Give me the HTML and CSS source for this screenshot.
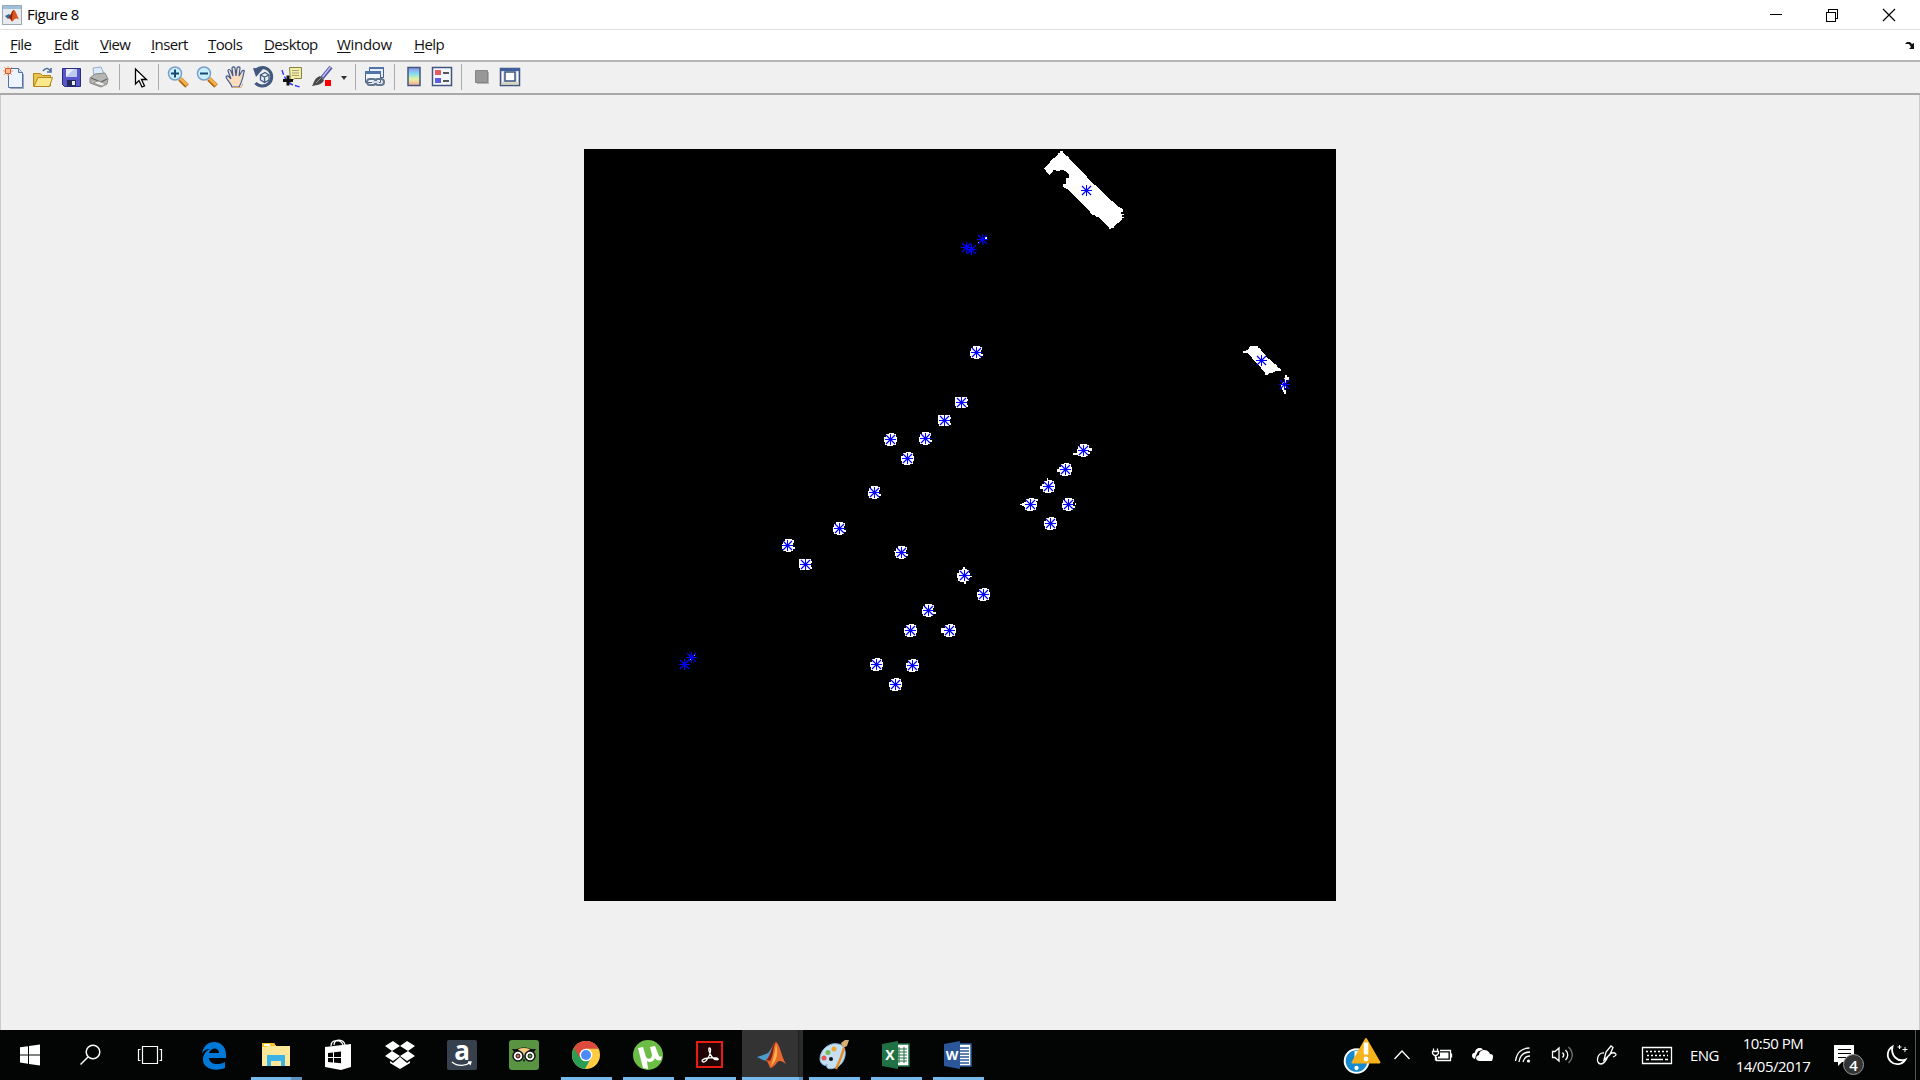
FILE: index.html
```html
<!DOCTYPE html>
<html lang="en">
<head>
<meta charset="utf-8">
<title>Figure 8</title>
<link rel="stylesheet" href="styles.css">
</head>
<body>
<div class="screen">
<header class="titlebar">
  <svg class="app-icon" viewBox="0 0 20 20"><rect x=".5" y=".5" width="19" height="19" fill="#e8ebee" stroke="#9aa7b4"/><path d="M1 1h18v3H1z" fill="#9cc0dc"/><path d="M3 11l4-2 2 2-3 3z" fill="#2a6a9c"/><path d="M6 13c3-2 4-8 6-8 2 1 3 6 5 9-3-1-4-1-7 3-1-2-2-4-4-4z" fill="#d9541e"/><path d="M12 5c-2 3-2 8-2 11-1-2-2-3-4-3 3-2 4-8 6-8z" fill="#8c2410"/></svg>
  <span class="title">Figure 8</span>
  <svg class="window-buttons" viewBox="0 0 150 28" shape-rendering="crispEdges"><g fill="none" stroke="#000"><path d="M0 13.500h12M56.500 11.500h9v9h-9zM58.500 11v-2.500h9v9h-2"/><path d="M113 8l12 12M125 8l-12 12" shape-rendering="auto" stroke-width="1.200"/></g></svg>
</header>
<nav class="menubar">
  <span class="menu m-file"><u>F</u>ile</span><span class="menu m-edit"><u>E</u>dit</span><span class="menu m-view"><u>V</u>iew</span><span class="menu m-insert"><u>I</u>nsert</span><span class="menu m-tools"><u>T</u>ools</span><span class="menu m-desktop"><u>D</u>esktop</span><span class="menu m-window"><u>W</u>indow</span><span class="menu m-help"><u>H</u>elp</span>
  <svg class="dock-arrow" viewBox="0 0 10 8"><path d="M0 3l2-2h3l2 2 2-1v6H4l2-2-2-3H0z" fill="#111"/></svg>
</nav>
<div class="toolbar">
  <div class="group file">
    <svg viewBox="0 0 24 24"><path d="M6.500 3.500h10l4 4v15h-14z" fill="#eef4ff" stroke="#5572a5"/><path d="M16.500 3.500v4h4" fill="#c8d8f4" stroke="#5572a5"/><path d="M21.500 9v14.500H8" fill="none" stroke="#9aa6bc"/><path d="M2 2l8 8M10 2l-8 8M6 1v10M1 6h10" stroke="#f0a070"/><path d="M3.500 3.500h5v5h-5z" fill="#ffb890" stroke="#d8582c"/></svg>
    <svg viewBox="0 0 24 24"><path d="M2.500 21V8.500h7l2 2h8V21z" fill="#e9c252" stroke="#b38618"/><path d="M3 21.500l4-9h14.500l-3 9z" fill="#fbe78c" stroke="#b38618"/><path d="M12 6c3-4 6-3 8 1m0-4v4h-4" fill="none" stroke="#536f9d" stroke-width="1.600"/></svg>
    <svg viewBox="0 0 24 24"><path d="M3.500 3.500h18v18h-16l-2-2z" fill="#5757c9" stroke="#2c2c86"/><path d="M7 4h11v8H7z" fill="#e8edfb"/><path d="M15 4h3v8H7z" fill="#bccaf0"/><path d="M8 15h9v6H8z" fill="#222a58"/><path d="M13 16h3v4h-3z" fill="#eee"/></svg>
    <svg viewBox="0 0 24 24"><path d="M6 11l-1-8 8-1 4 9z" fill="#dcebff" stroke="#9aabc4"/><path d="M2 13l5-4 10-1 3 6-1 5-6 3-11-4z" fill="#b5b5b2" stroke="#888"/><path d="M3 13l10 4 6-3" fill="none" stroke="#666" stroke-width="1.300"/><path d="M5 18l9 3 4-2-8-3z" fill="#f0f0ee" stroke="#999"/></svg>
  </div>
  <i class="sep"></i>
  <div class="group solo">
    <svg viewBox="0 0 24 24"><path d="M7.500 4v15l3.500-3.500 3 6.500 2.500-1-3-6.500h5z" fill="#fff" stroke="#000" stroke-width="1.300"/></svg>
  </div>
  <i class="sep"></i>
  <div class="group view">
    <svg viewBox="0 0 24 24"><path d="M14 14l7 7" stroke="#b56812" stroke-width="5"/><path d="M14 13l7 7" stroke="#f4b04c" stroke-width="3"/><circle cx="9" cy="8.500" r="6.500" fill="#c6f0fb" stroke="#7b9fcb" stroke-width="1.500"/><path d="M5 8.500h8M9 4.500v8" stroke="#1c4770" stroke-width="2"/></svg>
    <svg viewBox="0 0 24 24"><path d="M14 14l7 7" stroke="#b56812" stroke-width="5"/><path d="M14 13l7 7" stroke="#f4b04c" stroke-width="3"/><circle cx="9" cy="8.500" r="6.500" fill="#c6f0fb" stroke="#7b9fcb" stroke-width="1.500"/><path d="M5 8.500h8" stroke="#1c4770" stroke-width="2"/></svg>
    <svg viewBox="0 0 24 24"><path d="M8 22c-1-4-6-8-6-10 1-2 3-1 5 2L4 6c0-2 2-2 3 0l2 5-1-8c1-2 3-1 3 0l1 8 1-8c1-2 3-1 3 0l-1 8 3-5c1-1 3-1 2 1-1 5-2 10-5 15z" fill="#fbdcbc" stroke="#3f5c97" stroke-width="1.200"/><path d="M9 22.500h8l2-4" fill="none" stroke="#dda878"/></svg>
    <svg viewBox="0 0 24 24"><path d="M4 5a9.300 9.300 0 1 1-.5 13" fill="none" stroke="#42587f" stroke-width="3"/><path d="M1 3l10 1-7 8z" fill="#42587f"/><path d="M8.500 10l4.500-2.500 4 2.500v5l-4.500 2.500-4-2.500zM8.500 10l4 2 4.500-2M12.500 12v5" fill="#e6eefb" stroke="#42587f" stroke-width="1.300"/></svg>
    <svg viewBox="0 0 24 24"><path d="M1 5c2 7 5 12 9 14s7 2 9 3" fill="none" stroke="#33f" stroke-width="1.400" stroke-dasharray="5 2"/><path d="M8.500 2.500h12v11h-7l-4 4z" fill="#f1edaa" stroke="#87843e"/><path d="M11 5.500h7M11 8h7M11 10.500h7" stroke="#aaa46a"/><path d="M2 15.500h10M7 10.500v10" stroke="#111" stroke-width="3"/></svg>
    <svg viewBox="0 0 24 24"><path d="M21 2l-9 11" stroke="#52569c" stroke-width="4"/><path d="M20.500 2l-8 10" stroke="#babfff" stroke-width="1.500"/><path d="M2 21c2-3 2-8 8-10l4 4c-2 5-7 5-12 6z" fill="#494949"/><path d="M6 18l5-5" stroke="#999"/><path d="M15 15h6v6h-6z" fill="#f00"/></svg>
  </div>
  <svg class="drop" viewBox="0 0 8 24"><path d="M1 11h6l-3 4z" fill="#333"/></svg>
  <i class="sep"></i>
  <div class="group link">
    <svg viewBox="0 0 24 24"><path d="M6.500 2.500h14v10h-14z" fill="#e4edfa" stroke="#485d88"/><path d="M2.500 6.500h15v11h-15z" fill="#f0f5ff" stroke="#485d88"/><path d="M2 6h16v3H2zM6 2h15v2H6z" fill="#5474a8"/><g fill="none" stroke="#61758e" stroke-width="2"><rect x="4" y="14" width="9" height="6" rx="3"/><rect x="12" y="14" width="9" height="6" rx="3"/></g><path d="M9 17h7" stroke="#cddaeb" stroke-width="2"/></svg>
  </div>
  <i class="sep"></i>
  <div class="group bars">
    <svg viewBox="0 0 24 24"><defs><linearGradient id="cb" x2="0" y2="1"><stop stop-color="#918ce8"/><stop offset=".35" stop-color="#82dff1"/><stop offset=".65" stop-color="#e9f3a0"/><stop offset="1" stop-color="#f5a592"/></linearGradient></defs><path d="M6 2.500h12v18H6z" fill="url(#cb)" stroke="#405580" stroke-width="1.500"/></svg>
    <svg viewBox="0 0 24 24"><path d="M2.500 2.500h19v18h-19z" fill="#f6f8ff" stroke="#405580" stroke-width="1.500"/><path d="M5 5h6v5H5z" fill="#e25d5d"/><path d="M5 13h6v5H5z" fill="#5d5de2"/><path d="M13 8h6M13 16h6" stroke="#222" stroke-width="1.500"/></svg>
  </div>
  <i class="sep"></i>
  <div class="group plots">
    <svg viewBox="0 0 24 24"><path d="M7 7h12v12H7z" fill="#b5b5b5"/><path d="M5.500 5.500h12v12h-12z" fill="#989898" stroke="#858585"/></svg>
    <svg viewBox="0 0 24 24"><path d="M2.500 3.500h19v17h-19z" fill="#d7ddeb" stroke="#405580" stroke-width="1.500"/><path d="M2 3h20v3H2z" fill="#3f5f9d"/><path d="M7 7h10v9H7z" fill="#fff" stroke="#405580" stroke-width="1.500"/><path d="M4.500 7v10M19.500 7v10" stroke="#fff"/><path d="M3 18.500h18" stroke="#d8d5b5" stroke-width="2"/></svg>
  </div>
</div>
<main class="figure">
  <svg class="axes" viewBox="584 149 752 752" shape-rendering="crispEdges">
    <defs>
      <g id="star"><path d="M-5 .5H6M.5-5V6" fill="none" stroke="#00f"/><path d="M-1-1h3v3h-3z" fill="#00f"/><path d="M-4-4L5 5M5-4L-4 5" fill="none" stroke="#00f" stroke-width="1.200" shape-rendering="auto"/></g>
      <path id="a" d="M-4-5H-1V-6H4V-5H6V-2H7V3H6V6H3V7H-3V6H-5V3H-6V-2H-4z" fill="#fff"/>
      <path id="b" d="M-6-5H6V-3H7V-1H6V3H7V5H5V6H-5V4H-6z" fill="#fff"/>
      <path id="c" d="M-3-6H4V-5H6V-2H5V2H7V4H5V6H3V7H-2V6H-5V4H-6V-1H-5V-4H-3z" fill="#fff"/>
    </defs>
    <path fill="#fff" d="M1060 151H1063V153L1066 156L1069 157V159L1073 162L1077 167L1081 170L1084 174L1087 176V178L1092 183L1097 186L1101 191L1106 195L1110 200L1114 202L1117 206L1121 208L1123 210V212H1121V214H1124V215H1122V217H1124V218H1122V220L1118 223L1114 226V228H1111V229H1109V228L1103 222L1100 219L1098 217H1096L1094 215H1092L1090 212L1087 209L1082 203L1077 199L1072 193L1067 189L1063 187V184H1066V178H1069V175L1066 172V171L1061 170L1058 171L1053 170V172L1051 173L1050 175H1049L1047 173L1046 171L1044 169L1045 167L1050 163V161L1054 158L1058 154V153H1060z"/>
    <path fill="#fff" d="M1243 351H1245L1249 349V347L1251 346H1258V348H1260L1262 352L1265 354L1267 358L1271 360L1273 363L1277 365L1278 368L1281 369V371H1276L1272 373L1269 373L1267 375H1265V373L1262 370L1260 366L1253 360L1252 357L1249 355L1248 353H1243z"/>
    <path fill="#fff" d="M1285 375h2v2h2v3h-3v7l-1 1 1 4v2h-2v-1l-2-4-1-4 3-4z"/>
    <g fill="#fff"><path d="M985 237h2v2h-2zM978 242h2v1h-2zM970 251h1v1h-1zM693 655h2v1h-2zM690 659h1v1h-1z"/>
    <path d="M1073 453h6v2h-6zM1088 448h4v3h-4zM1057 469h4v3h-4zM1040 486h4v3h-4zM1047 478h1v3h-1zM1020 504h5v1h-5zM1022 503h3v3h-3zM1036 499h2v2h-2zM894 551h2v1h-2zM963 567h2v3h-2zM969 576h3v1h-3zM964 580h2v4h-2zM934 612h2v2h-2zM941 628h3v5h-3zM788 539h1v3h-1zM1075 503h1v2h-1z"/></g>
    <g><use href="#c" x="976" y="352"/><use href="#b" x="961" y="402"/><use href="#b" x="944" y="420"/><use href="#a" x="890" y="439"/><use href="#c" x="925" y="438"/><use href="#a" x="907" y="458"/><use href="#c" x="874" y="492"/><use href="#c" x="839" y="528"/><use href="#c" x="788" y="545"/><use href="#b" x="805" y="564"/><use href="#c" x="901" y="552"/><use href="#a" x="963" y="575"/><use href="#c" x="1083" y="450"/><use href="#a" x="1065" y="469"/><use href="#a" x="1048" y="486"/><use href="#a" x="1030" y="504"/><use href="#c" x="1068" y="504"/><use href="#a" x="1050" y="523"/><use href="#a" x="983" y="594"/><use href="#c" x="928" y="610"/><use href="#a" x="910" y="630"/><use href="#a" x="949" y="630"/><use href="#a" x="876" y="664"/><use href="#a" x="912" y="665"/><use href="#a" x="895" y="684"/></g>
    <g><use href="#star" x="1086" y="190"/><use href="#star" x="982" y="239"/><use href="#star" x="966" y="247"/><use href="#star" x="971" y="249"/><use href="#star" x="976" y="352"/><use href="#star" x="1261" y="360"/><use href="#star" x="1284" y="384"/><use href="#star" x="961" y="402"/><use href="#star" x="944" y="420"/><use href="#star" x="890" y="439"/><use href="#star" x="925" y="438"/><use href="#star" x="907" y="458"/><use href="#star" x="874" y="492"/><use href="#star" x="839" y="528"/><use href="#star" x="787" y="545"/><use href="#star" x="805" y="564"/><use href="#star" x="901" y="552"/><use href="#star" x="964" y="575"/><use href="#star" x="1083" y="450"/><use href="#star" x="1065" y="469"/><use href="#star" x="1048" y="486"/><use href="#star" x="1030" y="504"/><use href="#star" x="1068" y="504"/><use href="#star" x="1050" y="523"/><use href="#star" x="983" y="594"/><use href="#star" x="928" y="610"/><use href="#star" x="910" y="630"/><use href="#star" x="949" y="630"/><use href="#star" x="876" y="664"/><use href="#star" x="912" y="665"/><use href="#star" x="895" y="684"/><use href="#star" x="691" y="657"/><use href="#star" x="684" y="664"/></g>
  </svg>
</main>
<footer class="taskbar">
  <div class="system">
    <svg viewBox="0 0 60 50"><path d="M20 17.300l8-1.100V24.500h-8zM29 16l11-1.500v10H29zM20 25.500h8v8.300l-8-1.200zM29 25.500h11V35.500l-11-1.600z" fill="#fff"/></svg>
    <svg viewBox="0 0 60 50"><circle cx="33" cy="22" r="6.800" fill="none" stroke="#fff" stroke-width="1.500"/><path d="M28 27l-7.500 7.500" stroke="#fff" stroke-width="1.500"/></svg>
    <svg viewBox="0 0 60 50"><path d="M22.500 16.500h15v17h-15zM20.500 19.500h-2v11h2M39.500 19.500h2v11h-2" fill="none" stroke="#fff" stroke-width="1.200"/></svg>
  </div>
  <div class="apps">
    <div class="app"><svg viewBox="0 0 62 50"><path d="M19 24C20 16 25 12 31 12c8 0 13 6 12 16H26c0 6 9 8 16 4v6c-10 4-23 1-22-10 1-5 4-8 7-9-4 0-7 2-8 5zM26 23h10c0-6-8-6-10 0z" fill="#0078d7"/></svg></div>
    <div class="app open stacked"><svg viewBox="0 0 62 50"><path d="M17 13h12l2 3h14v20H17z" fill="#ffe79a"/><path d="M17 13h12l2 3h-9v1h-5z" fill="#f7c423"/><path d="M19 14h6v2h-6z" fill="#fff"/><path d="M22 36V25h18v11h-4v-5H26v5z" fill="#3bb3e6"/></svg></div>
    <div class="app"><svg viewBox="0 0 62 50"><path d="M18 17l26-3v23l-10 3-16-3z" fill="#fff"/><path d="M24 16c0-7 10-7 12-1M27 15c0-7 10-6 11 0" fill="none" stroke="#fff" stroke-width="1.300"/><path d="M21 23l5-.6V27h-5zM27 22.200l7-.8V27h-7zM21 28h5v4.500l-5-.5zM27 28h7v5.300l-7-.8z" fill="#000"/></svg></div>
    <div class="app"><svg viewBox="0 0 62 50"><path d="M24 11l7 5-8 5-7-5zM38 11l8 5-7 5-8-5zM23 21l8 5-7 5-8-5zM39 21l7 5-8 5-7-5zM31 27l7 6 3-2v2l-10 6-10-6v-2l3 2z" fill="#fff"/></svg></div>
    <div class="app"><svg viewBox="0 0 62 50"><rect x="16" y="10" width="30" height="30" rx="2" fill="#37414d"/><text x="31" y="30" text-anchor="middle" class="amazon">a</text><path d="M21 32c6 5 14 4 19 0m-3 0h3l-1 3" fill="none" stroke="#fff" stroke-width="1.300"/></svg></div>
    <div class="app"><svg viewBox="0 0 62 50"><rect x="16" y="10" width="30" height="30" rx="3" fill="#589442"/><path d="M19 19h5c4-2 10-2 14 0h5l-2 3H21z" fill="#111"/><path d="M25 19q6-2 12 0l-6 7z" fill="#f5cd7c"/><circle cx="25" cy="26" r="5" fill="#fff" stroke="#111" stroke-width="1.500"/><circle cx="37" cy="26" r="5" fill="#fff" stroke="#111" stroke-width="1.500"/><circle cx="25" cy="26" r="2" fill="#e06060" stroke="#111"/><circle cx="37" cy="26" r="2" fill="#5b9a45" stroke="#111"/><path d="M29.500 29.500h3l-1.500 2.500z" fill="#111"/></svg></div>
    <div class="app open"><svg viewBox="0 0 62 50"><circle cx="31" cy="25" r="14" fill="#fc4"/><path d="M31 25L18.900 18A14 14 0 0 0 30 39l6-11z" fill="#2a9d55"/><path d="M18.900 18A14 14 0 0 1 43.500 18.700H31l-6 9z" fill="#dc4a3e"/><circle cx="31" cy="25" r="6.300" fill="#fff"/><circle cx="31" cy="25" r="5" fill="#4c8bf5"/></svg></div>
    <div class="app open"><svg viewBox="0 0 62 50"><circle cx="31" cy="25" r="15" fill="#6cbd45"/><path d="M21 18l5-1 3 10c2 3 6 2 6-2l-2-8 5-1 4 10c1 1 2 1 3 0l-1 4c-3 1-5 0-6-2-1 4-6 5-8 3l1 8-5-1z" fill="#fff"/></svg></div>
    <div class="app open"><svg viewBox="0 0 62 50"><path d="M18 12h25v25H18z" fill="#210303" stroke="#e81c10" stroke-width="2"/><path d="M23 31c0-3 11-4 15-3 4 2-2 3-5-1-3-4-4-9-2.500-9 2 0 1 6-1.500 10-2 4-5 5-6 3z" fill="none" stroke="#fff" stroke-width="1.300"/></svg></div>
    <div class="app open active"><svg viewBox="0 0 62 50"><path d="M16 27l9-3c4-1 6-9 9-10l-8 17-4-1z" fill="#4a9cce"/><path d="M25 30c5-3 6-18 10-18 4 2 5 14 10 22-5-4-8-4-10 0-2 2-4 4-6 4-1-3-2-6-4-8z" fill="#e8682b"/><path d="M35 12c-3 3-2 13-6 19l-4-1c5-3 6-17 10-18z" fill="#831f14"/><path d="M35 14c2 7 2 16-5 22 3-9 4-15 5-22z" fill="#fbb64a"/></svg></div>
    <div class="app open"><svg viewBox="0 0 62 50"><path d="M17 29c0-10 10-17 18-15 10 1 9 16 1 22-7 4-14 4-12-2 0 3-7 1-7-5z" fill="#c4e0f2" stroke="#8bb9d8"/><circle cx="21" cy="28" r="2.500" fill="#e85555"/><circle cx="25" cy="22.500" r="2.500" fill="#71bd4d"/><circle cx="31" cy="19" r="2.500" fill="#f0a62d"/><circle cx="28" cy="29" r="2" fill="#111"/><path d="M33 39c4-8 6-14 8-21" stroke="#e48b2c" stroke-width="2.500"/><path d="M40 18l-2-5 4-3h4l-2 6z" fill="#d8ae76"/></svg></div>
    <div class="app open"><svg viewBox="0 0 62 50"><path d="M30 14h14v22H30z" fill="#fff" stroke="#207245" stroke-width="1.500"/><path d="M34 17v16M39 17v16M31 19h11M31 22h11M31 25h11M31 28h11M31 31h11" stroke="#207245"/><path d="M17 14l16-3v28l-16-3z" fill="#207245"/><text x="25" y="30" text-anchor="middle" class="office">X</text></svg></div>
    <div class="app open"><svg viewBox="0 0 62 50"><path d="M30 14h14v22H30z" fill="#fff" stroke="#2b579a" stroke-width="1.500"/><path d="M31 18h11M31 21h11M31 24h11M31 27h11M31 30h11M31 33h11" stroke="#2b579a" stroke-width="1.400"/><path d="M17 14l16-3v28l-16-3z" fill="#2b579a"/><text x="25" y="30" text-anchor="middle" class="office narrow">W</text></svg></div>
  </div>
  <div class="tray">
    <svg class="tray-icons" viewBox="1340 0 340 50"><g fill="none" stroke="#fff" stroke-width="1.300">
      <circle cx="1356.500" cy="31" r="11.800" fill="#168ad0" stroke-width="2"/><path d="M1356.500 21v10" stroke-width="4"/><circle cx="1356.500" cy="38" r="1.500" fill="#fff"/><path d="M1366 9l13.500 23.500h-27z" fill="#f7b31c" stroke="#f7b31c" stroke-width="2" stroke-linejoin="round"/><path d="M1366 12.500v12" stroke-width="4.500"/><circle cx="1366" cy="29" r="1.800" fill="#fff"/>
      <path d="M1394.500 29l7.500-8 7.500 8"/>
      <path d="M1440 20.500h10.500v10h-14v-3.500M1451.500 23.500v4"/><path d="M1440 22.500h8.500v6H1438v-2h2z" fill="#fff" stroke="none"/><path d="M1433.500 18.500v3M1437.500 18.500v3M1432.500 21.500h6v2l-2 2h-2l-2-2zM1435.500 26v4.500"/>
      <path d="M1475 29c-4-1-4-6 0-6.500 0-4 5-6 8-3l-5 2-2 4z" fill="#fff" stroke="none"/><path d="M1480 31c-5 0-5-5-1-6 0-6 9-7 11-1 4 0 3.500 3 2 7z" fill="#fff" stroke="none"/>
      <path d="M1515.500 31c1-8 6-13 14-13M1519 32c1-7 5-10 11-10M1523 32c1-4 3-6 7-6"/><circle cx="1528.500" cy="31" r="1.600" fill="#fff" stroke="none"/>
      <path d="M1552.500 21.500h2.500l4-3.500v13l-4-3.500h-2.500zM1562.500 22.500c1.500 1.500 1.500 3.500 0 5M1565.500 20c3 3 3 7 0 10"/><path d="M1568.500 17c5 5 5 11 0 16" stroke="#777"/>
      <path d="M1604 30l2-8 5-6 2 1.500-3 7zM1604 23c-7-1-9 11-3 11 6-1 5-7 9-10 5-3 9 1 3 3"/>
      <path d="M1642.500 17.500h29v16h-29z"/><path d="M1646 21.500h23M1647 25.500h21" stroke-dasharray="2 2"/><path d="M1646 29.500h3M1651 29.500h12M1665 29.500h3"/>
    </g></svg>
    <span class="lang">ENG</span>
    <div class="clock"><span>10:50 PM</span><span>14/05/2017</span></div>
    <svg class="action" viewBox="1830 0 90 50"><path d="M1834 15h20v17h-12l-4 4v-4h-4z" fill="#fff"/><path d="M1838 19.500h13M1838 23.500h13M1838 27.500h8" stroke="#000"/><circle cx="1853.500" cy="34.500" r="10" fill="#333" stroke="#999"/><text x="1853.500" y="40.500" text-anchor="middle" class="badge">4</text><path d="M1892.500 16.500a9.500 9.500 0 1 0 13 13c-8 3-15-4-13-13z" fill="none" stroke="#fff" stroke-width="1.800"/><path d="M1899.500 15v4M1897.500 17h4M1905 17v5M1902.500 19.500h5" stroke="#fff"/><path d="M1915.500 0v50" stroke="#555"/></svg>
  </div>
</footer>
</div>
</body>
</html>
```
FILE: styles.css
```css
* { box-sizing: border-box; }
body { margin: 0; font-family: "Open Sans", "Noto Sans", sans-serif; color: #111; overflow: hidden; }
svg { display: block; flex: none; }
.screen { width: 1920px; height: 1080px; display: flex; flex-direction: column; background: #f0f0f0; }
.titlebar { height: 29px; flex: none; display: flex; align-items: center; padding-left: 2px; background: #fff; }
.app-icon { width: 20px; height: 20px; }
.title { margin-left: 5px; padding-bottom: 1px; font-size: 15px; letter-spacing: -0.5px; line-height: 28px; color: #000; }
.window-buttons { width: 150px; height: 28px; margin-left: auto; }
.menubar { height: 33px; flex: none; display: flex; align-items: center; padding: 0 5px 1px 10px; background: #fff; border-top: 1px solid #e0e0e0; border-bottom: 2px solid #b5b5b5; font-size: 15px; letter-spacing: -0.6px; }
.menu { flex: none; line-height: 29px; }
.menu u { text-underline-offset: 2px; text-decoration-thickness: 1px; }
.m-file { width: 44px; }
.m-edit { width: 46px; }
.m-view { width: 51px; }
.m-insert { width: 57px; }
.m-tools { width: 56px; }
.m-desktop { width: 73px; }
.m-window { width: 77px; letter-spacing: -0.3px; }
.dock-arrow { width: 10px; height: 8px; margin-left: auto; }
.toolbar { height: 33px; flex: none; display: flex; align-items: center; padding: 0 0 1px 2px; background: #f0f0f0; border-bottom: 2px solid #a8a8a8; }
.group { display: flex; gap: 5px; }
.group svg { width: 24px; height: 24px; }
.sep { width: 1px; height: 26px; margin: 0 7px 0 6px; background: #aaa; flex: none; }
.file { gap: 4.600px; padding-right: 1.200px; }
.solo { padding-left: 1px; }
.view { gap: 4.800px; }
.drop { width: 8px; height: 24px; margin-left: 6px; }
.drop + .sep { margin-left: 7px; }
.link { padding-right: 1px; }
.bars { gap: 4px; padding-right: 1px; }
.plots { gap: 4px; padding-left: 1px; }
.figure { flex: 1; display: flex; justify-content: center; padding-top: 54px; border-left: 1px solid #ccc; border-right: 1px solid #ccc; background: #f0f0f0; }
.axes { width: 752px; height: 752px; background: #000; }
.taskbar { height: 50px; flex: none; display: flex; background: #030404; color: #fff; }
.system { display: flex; }
.system svg { width: 60px; height: 50px; }
.apps { display: flex; margin-left: 3px; }
.app { width: 62px; height: 50px; display: flex; flex-direction: column; position: relative; }
.app svg { width: 62px; height: 50px; }
.open::after { content: ""; position: absolute; left: 6px; bottom: 0; width: 51px; height: 3px; background: #76b9ed; }
.stacked::after { background: linear-gradient(90deg, #76b9ed 40px, #5c92bd 40px); }
.active { background: linear-gradient(90deg, transparent 1px, #333 1px, #333 57px, #202020 57px, #202020 58px, #2b2b2b 58px); }
.active::after { left: 1px; width: 61px; background: linear-gradient(90deg, #76b9ed 57px, #5c92bd 57px); }
.tray { display: flex; align-items: center; margin-left: auto; }
.tray-icons { width: 340px; height: 50px; }
.lang { width: 50px; padding-left: 10px; font-size: 15px; letter-spacing: -0.6px; }
.clock { width: 100px; padding-right: 14px; text-align: center; display: flex; flex-direction: column; font-size: 15px; line-height: 23px; letter-spacing: -0.5px; }
.action { width: 90px; height: 50px; }
.amazon { font: 700 26px "Open Sans", sans-serif; fill: #fff; }
.office { font: 700 14px "Open Sans", sans-serif; fill: #fff; }
.narrow { font-size: 13px; }
.badge { font: 600 15px "Open Sans", sans-serif; fill: #fff; }
```
